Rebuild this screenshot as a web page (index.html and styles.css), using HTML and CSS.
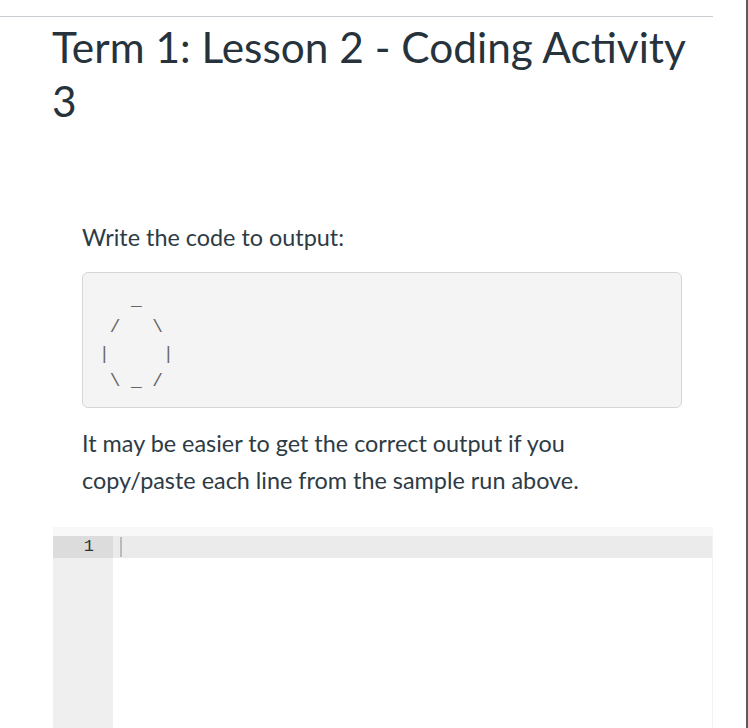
FILE: index.html
```html
<!DOCTYPE html>
<html>
<head>
<meta charset="utf-8">
<link rel="stylesheet" href="styles.css">
</head>
<body>
<div class="frame">
  <div class="topline"></div>
  <h1 class="title">Term 1: Lesson 2 - Coding Activity 3</h1>
  <div class="content">
    <p class="lead">Write the code to output:</p>
    <pre class="sample">   _
 /   \
|     |
 \ _ /</pre>
    <p class="note">It may be easier to get the correct output if you copy/paste each line from the sample run above.</p>
  </div>
  <div class="editor">
    <div class="editor-top"></div>
    <div class="editor-body">
      <div class="gutter">
        <div class="gutter-num">1</div>
      </div>
      <div class="lines">
        <div class="active-line"><span class="cursor"></span></div>
      </div>
    </div>
  </div>
</div>
</body>
</html>
```

FILE: styles.css
```css
html, body {
  margin: 0;
  padding: 0;
  background: #fff;
}
.frame {
  width: 746px;
  height: 728px;
  border-right: 2px solid #5b5b5b;
  overflow: hidden;
  font-family: Lato, "Noto Sans", sans-serif;
  color: #2d3b45;
}
.topline {
  width: 713px;
  height: 1px;
  background: #c7cdd1;
  margin-top: 16px;
}
.title {
  margin: 3px 0 0 52px;
  width: 660px;
  font-size: 42.4px;
  line-height: 54px;
  font-weight: 400;
  color: #27333c;
}
.content {
  padding-left: 82px;
  width: 600px;
}
.lead {
  margin: 94px 0 0 0;
  font-size: 23.4px;
  line-height: 30px;
}
.sample {
  margin: 20px 0 0 0;
  box-sizing: border-box;
  width: 600px;
  height: 136px;
  padding: 14px 16px;
  background: #f4f4f4;
  border: 1px solid #d6d6d6;
  border-radius: 6px;
  font-family: "Liberation Mono", monospace;
  font-size: 17.8px;
  line-height: 27px;
  color: #666;
}
.note {
  margin: 17px 0 0 0;
  width: 582px;
  font-size: 23.4px;
  line-height: 37px;
}
.editor {
  margin: 28px 0 0 53px;
  width: 660px;
}
.editor-top {
  height: 9px;
  background: #f8f8f8;
}
.editor-body {
  display: flex;
  height: 200px;
}
.gutter {
  width: 60px;
  background: #efefef;
}
.gutter-num {
  height: 22px;
  background: #dcdcdc;
  font-family: "Liberation Mono", monospace;
  font-size: 17px;
  line-height: 22px;
  text-align: right;
  padding-right: 19px;
  color: #333;
}
.lines {
  flex: 1;
  background: #fff;
  border-right: 1px solid #f2f2f2;
}
.active-line {
  height: 22px;
  background: #ebebeb;
  display: flex;
  align-items: center;
  padding-left: 7px;
}
.cursor {
  width: 2px;
  height: 20px;
  background: #bbb;
}
```
